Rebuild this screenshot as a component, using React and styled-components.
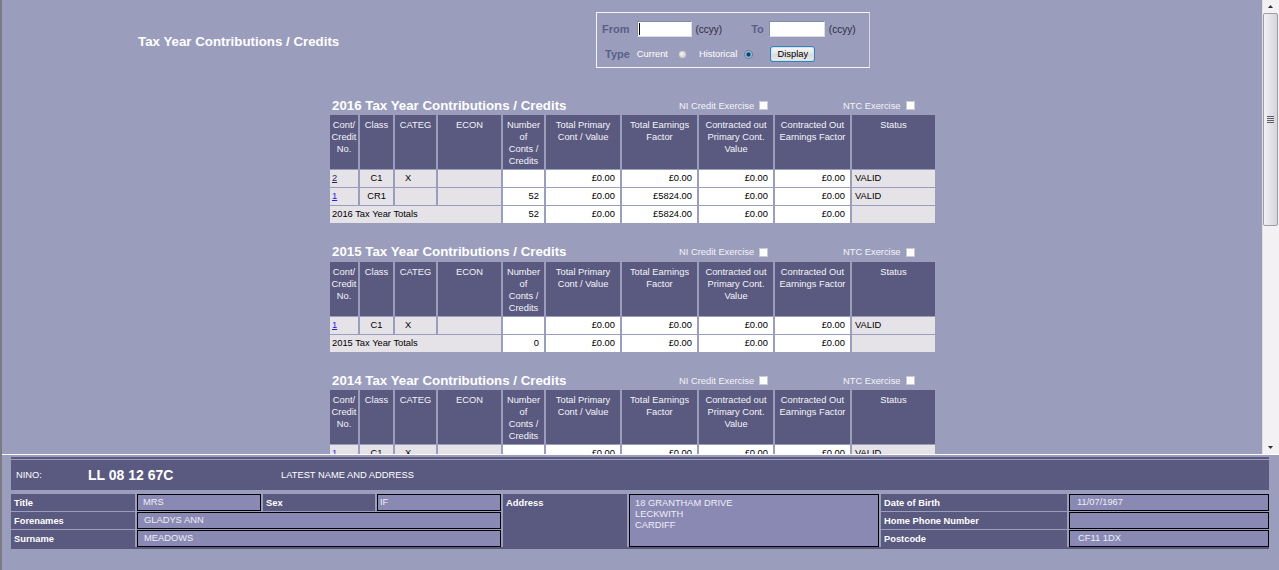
import React from "react";
import styled, { createGlobalStyle } from "styled-components";

// palette
const PAGE_BG = "#9b9dbd";
const DARK = "#5a5980";
const FIELD = "#8a89b3";
const GREY_CELL = "#e6e3e8";
const SMALL = "9.33px";

const GlobalStyle = createGlobalStyle`
  html, body {
    margin: 0;
    padding: 0;
    height: 100%;
    overflow: hidden;
    background: ${PAGE_BG};
  }
  body {
    font-family: "Liberation Sans", Arial, sans-serif;
  }
  * {
    box-sizing: border-box;
  }
`;

const Screen = styled.div`
  height: 570px;
  display: flex;
  flex-direction: column;
  border-left: 2px solid #7b7b84;
  background: ${PAGE_BG};
`;

/* upper frame with its own scroll rail */
const Frame = styled.div`
  flex-shrink: 0;
  height: 455px;
  display: flex;
  border-bottom: 1px solid #fff;
`;

const FrameBody = styled.div`
  flex: 1;
  min-width: 0;
  overflow: hidden;
`;

const ScrollRail = styled.div`
  flex-shrink: 0;
  width: 17px;
  display: flex;
  flex-direction: column;
  background: #f3f1f4;
  border-left: 1px solid #e3e1e7;
`;

const RailButton = styled.div`
  height: 13px;
  display: flex;
  align-items: center;
  justify-content: center;
  padding-right: 1px;
  color: #2e2e34;
`;

const RailTrack = styled.div`
  flex: 1;
  padding-right: 1px;
`;

const Thumb = styled.div`
  height: 213px;
  border: 1px solid #9d9ca8;
  border-radius: 2px;
  background:
    repeating-linear-gradient(to bottom, #5e5e68 0 1px, transparent 1px 2px)
      center / 7px 8px no-repeat,
    linear-gradient(to right, #f2f1f5, #d5d4dc);
`;

const TopBar = styled.div`
  display: flex;
  align-items: center;
  height: 56px;
  margin-top: 12px;
`;

const PageTitle = styled.h1`
  flex-shrink: 0;
  width: 458px;
  margin: 0 0 0 136px;
  padding-top: 2px;
  font-size: 13.3px;
  font-weight: bold;
  color: #fff;
`;

const FilterBox = styled.div`
  width: 274px;
  height: 56px;
  border: 1px solid #f6f6fa;
  border-right-color: #d9d9e6;
  padding-top: 8px;
  display: flex;
  flex-direction: column;
  gap: 9px;
`;

const FilterRow = styled.div`
  display: flex;
  align-items: center;
  height: 16px;
  padding-left: ${(p) => p.$indent}px;
`;

const FilterLabel = styled.span`
  font-size: 11px;
  font-weight: bold;
  color: #5a5f88;
  margin-left: ${(p) => p.$gap || 0}px;
`;

const Hint = styled.span`
  font-size: 10px;
  color: #2b2b3c;
  margin-left: 4px;
`;

const YearInput = styled.input`
  width: ${(p) => p.$w}px;
  height: 16px;
  margin: 0 0 0 ${(p) => p.$gap}px;
  padding: 0;
  border: 1px solid #7f8fa8;
  border-right-color: #d8dde6;
  border-bottom-color: #d8dde6;
  background: ${(p) =>
    p.$caret
      ? "linear-gradient(#000, #000) no-repeat 1px 1px / 1px 12px, #fff"
      : "#fff"};
  outline: none;
`;

const OptionText = styled.span`
  font-size: ${SMALL};
  color: #fff;
  margin-left: ${(p) => p.$gap}px;
`;

const Radio = styled.input`
  appearance: none;
  width: 9px;
  height: 9px;
  margin: 0 0 0 ${(p) => p.$gap}px;
  border-radius: 50%;
  border: 1px solid #a4a4ac;
  background: radial-gradient(circle at 40% 40%, #f4f4f6, #bdbdc4);

  &:checked {
    border-color: #5b7896;
    background: radial-gradient(circle, #123f70 0 1.6px, #6ea4d2 2.4px, #eef4fa 4px);
  }
`;

const DisplayButton = styled.button`
  width: 45px;
  height: 16px;
  margin-left: 17px;
  padding: 0;
  font-family: inherit;
  font-size: ${SMALL};
  color: #000;
  border: 1px solid #3c7fb1;
  border-radius: 3px;
  background: linear-gradient(#f7f7f7, #e6e6e6 50%, #d9d9d9 51%, #ececec);
  box-shadow: inset 0 0 0 1px #c7e5f7;
`;

/* tax year tables */
const Sections = styled.div`
  margin-left: 326px;
  width: 609px;
  padding: 28px 0 46px;
  display: flex;
  flex-direction: column;
  gap: 18.5px;
`;

const SectionHead = styled.div`
  display: flex;
  align-items: center;
  height: 18px;
  padding: 0 2px;
`;

const SectionTitle = styled.h2`
  flex-shrink: 0;
  width: 349px;
  margin: 0;
  padding-left: 2px;
  font-size: 13.3px;
  font-weight: bold;
  color: #fff;
  white-space: nowrap;
`;

const Exercise = styled.label`
  flex-shrink: 0;
  width: ${(p) => (p.$w ? `${p.$w}px` : "auto")};
  display: flex;
  align-items: center;
  gap: 5px;
  padding-top: 1px;
  font-size: ${SMALL};
  color: #f3f3f8;
`;

const Check = styled.input`
  appearance: none;
  width: 9px;
  height: 9px;
  margin: 0;
  border: 1px solid #cacad3;
  background: #fff;
`;

const Grid = styled.table`
  width: 609px;
  table-layout: fixed;
  border-collapse: separate;
  border-spacing: 2px 1px;
  font-size: ${SMALL};
`;

const Col = styled.col`
  width: ${(p) => p.$w}px;
`;

const Head = styled.th`
  padding: 4px 1px 2px;
  vertical-align: top;
  background: ${DARK};
  color: #f4f4fa;
  font-weight: normal;
  line-height: 12px;
  text-align: center;
  white-space: nowrap;
`;

const Cell = styled.td`
  height: 17px;
  padding: 0 ${(p) => (p.$align === "right" ? 5 : 0)}px 0 ${(p) => p.$indent ?? 2}px;
  background: ${(p) => (p.$tone === "grey" ? GREY_CELL : "#fff")};
  color: #000;
  line-height: 17px;
  text-align: ${(p) => p.$align || "left"};
  white-space: nowrap;
  overflow: hidden;
`;

const RefLink = styled.a`
  color: ${(p) => (p.$visited ? "#24245e" : "#2424dd")};
  text-decoration: underline;
`;

/* lower details panel */
const Details = styled.div`
  margin: 2px 10px 0 9px;
  padding-top: 1px;
  border-top: 2px solid ${DARK};
  border-bottom: 2px solid ${DARK};
`;

const NinoBar = styled.div`
  height: 30px;
  display: grid;
  grid-template-columns: 72px 193px 1fr;
  align-items: center;
  padding-left: 5px;
  background: ${DARK};
  color: #fff;
  font-size: ${SMALL};
`;

const NinoValue = styled.span`
  font-size: 14px;
  font-weight: bold;
`;

const InfoGrid = styled.div`
  margin-top: 4px;
  display: grid;
  grid-template-columns: 124px 124px 112px 124px 124px 250px 186px 200px;
  grid-template-rows: repeat(3, 17px);
  gap: 1px 2px;
`;

const FieldLabel = styled.div`
  grid-row: ${(p) => (p.$rows ? `span ${p.$rows}` : "auto")};
  padding: 2px 0 0 3px;
  background: ${DARK};
  color: #fff;
  font-size: ${SMALL};
  font-weight: bold;
  line-height: 14px;
`;

const FieldValue = styled.div`
  grid-column: ${(p) => (p.$cols ? `span ${p.$cols}` : "auto")};
  grid-row: ${(p) => (p.$rows ? `span ${p.$rows}` : "auto")};
  padding: ${(p) => (p.$rows ? "3px" : "1px")} 0 0 ${(p) => p.$indent ?? 5}px;
  border: 1px solid #000;
  background: ${FIELD};
  color: #eeedf6;
  font-size: ${SMALL};
  line-height: ${(p) => (p.$rows ? "11px" : "13px")};
  white-space: pre-line;
  overflow: hidden;
`;

const COLUMNS = [
  { w: 28, label: ["Cont/", "Credit", "No."] },
  { w: 33, label: ["Class"] },
  { w: 41, label: ["CATEG"] },
  { w: 63, label: ["ECON"] },
  { w: 41, label: ["Number", "of", "Conts /", "Credits"] },
  { w: 74, label: ["Total Primary", "Cont / Value"] },
  { w: 75, label: ["Total Earnings", "Factor"] },
  { w: 74, label: ["Contracted out", "Primary Cont.", "Value"] },
  { w: 75, label: ["Contracted Out", "Earnings Factor"] },
  { w: 83, label: ["Status"] },
];

const ZERO = "£0.00";

const YEARS = [
  {
    year: 2016,
    rows: [
      { no: "2", visited: true, cls: "C1", categ: "X", num: "", money: [ZERO, ZERO, ZERO, ZERO], status: "VALID" },
      { no: "1", cls: "CR1", categ: "", num: "52", money: [ZERO, "£5824.00", ZERO, ZERO], status: "VALID" },
    ],
    totals: { num: "52", money: [ZERO, "£5824.00", ZERO, ZERO] },
  },
  {
    year: 2015,
    rows: [{ no: "1", cls: "C1", categ: "X", num: "", money: [ZERO, ZERO, ZERO, ZERO], status: "VALID" }],
    totals: { num: "0", money: [ZERO, ZERO, ZERO, ZERO] },
  },
  {
    year: 2014,
    rows: [{ no: "1", cls: "C1", categ: "X", num: "", money: [ZERO, ZERO, ZERO, ZERO], status: "VALID" }],
    totals: { num: "0", money: [ZERO, ZERO, ZERO, ZERO] },
  },
  {
    year: 2013,
    rows: [{ no: "1", cls: "C1", categ: "X", num: "", money: [ZERO, ZERO, ZERO, ZERO], status: "VALID" }],
    totals: { num: "0", money: [ZERO, ZERO, ZERO, ZERO] },
  },
  {
    year: 2012,
    rows: [{ no: "1", cls: "CR1", categ: "", num: "52", money: [ZERO, "£5304.00", ZERO, ZERO], status: "VALID" }],
    totals: { num: "52", money: [ZERO, "£5304.00", ZERO, ZERO] },
  },
  {
    year: 2011,
    rows: [{ no: "1", cls: "CR1", categ: "", num: "52", money: [ZERO, "£5044.00", ZERO, ZERO], status: "VALID" }],
    totals: { num: "52", money: [ZERO, "£5044.00", ZERO, ZERO] },
  },
];

function Arrow({ down }) {
  return (
    <svg width="5" height="3" viewBox="0 0 5 3">
      <polygon points={down ? "0,0 5,0 2.5,3" : "0,3 5,3 2.5,0"} fill="currentColor" />
    </svg>
  );
}

function TaxYearSection({ year, rows, totals }) {
  return (
    <div>
      <SectionHead>
        <SectionTitle>{year} Tax Year Contributions / Credits</SectionTitle>
        <Exercise $w={164}>
          NI Credit Exercise <Check type="checkbox" />
        </Exercise>
        <Exercise>
          NTC Exercise <Check type="checkbox" />
        </Exercise>
      </SectionHead>
      <Grid>
        <colgroup>
          {COLUMNS.map((c, i) => (
            <Col key={i} $w={c.w} />
          ))}
        </colgroup>
        <thead>
          <tr>
            {COLUMNS.map((c, i) => (
              <Head key={i}>
                {c.label.map((line, j) => (
                  <React.Fragment key={j}>
                    {j > 0 && <br />}
                    {line}
                  </React.Fragment>
                ))}
              </Head>
            ))}
          </tr>
        </thead>
        <tbody>
          {rows.map((r) => (
            <tr key={r.no}>
              <Cell $tone="grey">
                <RefLink href="#" $visited={r.visited}>
                  {r.no}
                </RefLink>
              </Cell>
              <Cell $tone="grey" $align="center" $indent={0}>
                {r.cls}
              </Cell>
              <Cell $tone="grey" $indent={10}>
                {r.categ}
              </Cell>
              <Cell $tone="grey" />
              <Cell $align="right">{r.num}</Cell>
              {r.money.map((m, i) => (
                <Cell key={i} $align="right">
                  {m}
                </Cell>
              ))}
              <Cell $tone="grey" $indent={3}>
                {r.status}
              </Cell>
            </tr>
          ))}
          <tr>
            <Cell $tone="grey" colSpan={4}>
              {year} Tax Year Totals
            </Cell>
            <Cell $align="right">{totals.num}</Cell>
            {totals.money.map((m, i) => (
              <Cell key={i} $align="right">
                {m}
              </Cell>
            ))}
            <Cell $tone="grey" />
          </tr>
        </tbody>
      </Grid>
    </div>
  );
}

export default function App() {
  return (
    <>
      <GlobalStyle />
      <Screen>
        <Frame>
          <FrameBody>
            <TopBar>
              <PageTitle>Tax Year Contributions / Credits</PageTitle>
              <FilterBox>
                <FilterRow $indent={5}>
                  <FilterLabel>From</FilterLabel>
                  <YearInput $w={55} $gap={7} $caret />
                  <Hint>(ccyy)</Hint>
                  <FilterLabel $gap={29}>To</FilterLabel>
                  <YearInput $w={56} $gap={5} />
                  <Hint>(ccyy)</Hint>
                </FilterRow>
                <FilterRow $indent={8}>
                  <FilterLabel>Type</FilterLabel>
                  <OptionText $gap={7}>Current</OptionText>
                  <Radio type="radio" name="type" $gap={10} />
                  <OptionText $gap={12}>Historical</OptionText>
                  <Radio type="radio" name="type" $gap={7} defaultChecked />
                  <DisplayButton type="button">Display</DisplayButton>
                </FilterRow>
              </FilterBox>
            </TopBar>
            <Sections>
              {YEARS.map((y) => (
                <TaxYearSection key={y.year} {...y} />
              ))}
            </Sections>
          </FrameBody>
          <ScrollRail>
            <RailButton>
              <Arrow />
            </RailButton>
            <RailTrack>
              <Thumb />
            </RailTrack>
            <RailButton>
              <Arrow down />
            </RailButton>
          </ScrollRail>
        </Frame>

        <Details>
          <NinoBar>
            <span>NINO:</span>
            <NinoValue>LL 08 12 67C</NinoValue>
            <span>LATEST NAME AND ADDRESS</span>
          </NinoBar>
          <InfoGrid>
            <FieldLabel>Title</FieldLabel>
            <FieldValue $indent={5}>MRS</FieldValue>
            <FieldLabel>Sex</FieldLabel>
            <FieldValue $indent={2}>IF</FieldValue>
            <FieldLabel $rows={3}>Address</FieldLabel>
            <FieldValue $rows={3} $indent={5}>
              {"18 GRANTHAM DRIVE\nLECKWITH\nCARDIFF"}
            </FieldValue>
            <FieldLabel>Date of Birth</FieldLabel>
            <FieldValue $indent={7}>11/07/1967</FieldValue>

            <FieldLabel>Forenames</FieldLabel>
            <FieldValue $cols={3} $indent={6}>GLADYS ANN</FieldValue>
            <FieldLabel>Home Phone Number</FieldLabel>
            <FieldValue />

            <FieldLabel>Surname</FieldLabel>
            <FieldValue $cols={3} $indent={6}>MEADOWS</FieldValue>
            <FieldLabel>Postcode</FieldLabel>
            <FieldValue $indent={8}>CF11 1DX</FieldValue>
          </InfoGrid>
        </Details>
      </Screen>
    </>
  );
}
